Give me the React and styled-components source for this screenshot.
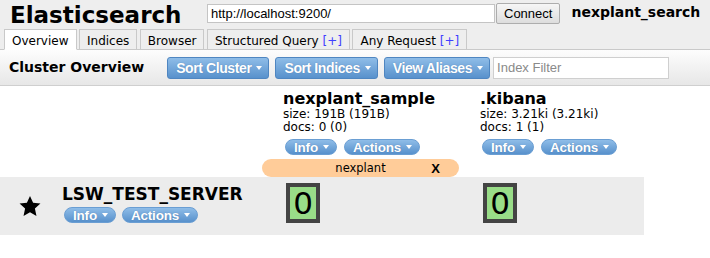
import React from "react";
import styled, { createGlobalStyle } from "styled-components";

const verdana = `"DejaVu Sans", Verdana, sans-serif`;
const arial = `"Liberation Sans", Arial, sans-serif`;
const COLS = "262px 197px 185px";

const GlobalStyle = createGlobalStyle`
  html, body { margin: 0; padding: 0; background: #fff; }
  body { font-family: ${verdana}; font-size: 12px; color: #000; }
`;

const Header = styled.div`
  display: flex;
  align-items: flex-start;
  height: 29px;
  padding-left: 10px;
  background: #eee;
`;

const Title = styled.h1`
  margin: 0;
  padding-top: 1px;
  width: 197px;
  font: bold 23px/28px ${verdana};
`;

const UrlInput = styled.input`
  box-sizing: border-box;
  width: 288px;
  height: 19px;
  margin: 4px 0 0;
  padding: 0 3px;
  border: 1px solid #c4c4c4;
  background: #fff;
  color: #000;
  font: 13px ${arial};
  outline: none;
`;

const ConnectButton = styled.button`
  box-sizing: border-box;
  height: 21px;
  margin: 3px 0 0 1px;
  padding: 0 7px;
  border: 1px solid #adadad;
  border-radius: 2px;
  background: linear-gradient(#f6f6f6, #dddddd);
  color: #000;
  font: 13px ${arial};
`;

const ClusterName = styled.div`
  margin: 4px 0 0 11px;
  font: bold 14px/17px ${verdana};
`;

const TabBar = styled.div`
  display: flex;
  gap: 2.5px;
  padding-left: 4px;
  background: #eee;
  border-bottom: 1px solid #c9c9c9;
`;

const Tab = styled.div`
  box-sizing: border-box;
  height: 21px;
  margin-bottom: -1px;
  padding: 3px 7px 0;
  border: 1px solid #c9c9c9;
  border-bottom-color: ${(p) => (p.$active ? "#fff" : "#c9c9c9")};
  background: ${(p) => (p.$active ? "#fff" : "#eee")};
  font: 12px/16px ${verdana};
  white-space: nowrap;
`;

const Plus = styled.span`
  color: #4040ff;
`;

const Toolbar = styled.div`
  display: flex;
  align-items: center;
  height: 35px;
  padding-left: 9px;
  border-bottom: 1px solid #cfcfcf;
  background: linear-gradient(#fdfdfd, #e7e7e7);
`;

const ToolbarTitle = styled.h2`
  margin: 0 23px 0 0;
  font: bold 14px/17px ${verdana};
`;

const Caret = styled.span`
  width: 0;
  height: 0;
  border-left: 3.5px solid transparent;
  border-right: 3.5px solid transparent;
  border-top: 4px solid #fff;
`;

const DropButton = styled.div`
  box-sizing: border-box;
  display: inline-flex;
  align-items: center;
  gap: 5px;
  height: 22px;
  padding: 0 6px 0 8px;
  border: 1px solid #4f86c1;
  border-radius: 3px;
  background: linear-gradient(#8fbde8, #5891cc);
  color: #fff;
  font: bold 14px ${arial};
  letter-spacing: -0.4px;
  text-shadow: 0 0 1px rgba(40, 80, 130, 0.5);
  & + & {
    margin-left: 6px;
  }
`;

const FilterInput = styled.input`
  box-sizing: border-box;
  width: 176px;
  height: 22px;
  margin-left: 3px;
  padding: 0 3px;
  border: 1px solid #cfcfcf;
  background: #fff;
  font: 13px ${arial};
  outline: none;
  &::placeholder {
    color: #8a8a8a;
  }
`;

const Overview = styled.div`
  display: grid;
  grid-template-columns: ${COLS};
`;

const IndexHead = styled.div`
  padding: 3px 0 4px 21px;
`;

const IndexName = styled.h3`
  margin: 0;
  font: bold 16px/19px ${verdana};
`;

const Stat = styled.div`
  font: 12px/13px ${verdana};
`;

const PillRow = styled.div`
  display: flex;
  gap: ${(p) => p.$gap}px;
  margin: ${(p) => p.$top}px 0 0 2px;
`;

const Pill = styled.div`
  box-sizing: border-box;
  display: inline-flex;
  align-items: center;
  gap: 5px;
  height: 16px;
  padding: 0 7px 0 8px;
  border: 1px solid #6a9ed3;
  border-radius: 8px;
  background: linear-gradient(#8fbde8, #5891cc);
  color: #fff;
  font: bold 13.5px ${arial};
  letter-spacing: -0.2px;
  text-shadow: 0 0 1px rgba(40, 80, 130, 0.5);
`;

const AliasBar = styled.div`
  grid-column: 2;
  display: grid;
  grid-template-columns: 1fr auto 1fr;
  align-items: center;
  height: 18px;
  border-radius: 9px;
  background: #ffcc99;
  font: 11.5px/18px ${verdana};
`;

const AliasName = styled.span`
  grid-column: 2;
`;

const AliasRemove = styled.span`
  justify-self: end;
  padding-right: 19px;
  font: bold 13px ${arial};
`;

const ClusterRow = styled.div`
  grid-column: 1 / -1;
  display: grid;
  grid-template-columns: ${COLS};
  background: #ececec;
`;

const NodeCell = styled.div`
  display: flex;
  align-items: center;
  padding-left: 19px;
`;

const NodeInfo = styled.div`
  margin: 7px 0 12px 21px;
`;

const NodeName = styled.h3`
  margin: 0;
  font: bold 17px/20px ${verdana};
`;

const ShardCell = styled.div`
  padding: 6px 0 0 24px;
`;

const Shard = styled.div`
  box-sizing: border-box;
  width: 34px;
  height: 40px;
  border: 4px solid #444;
  background: #99dd88;
  font: 31px/32px ${verdana};
  text-align: center;
`;

function Star() {
  return (
    <svg width="22" height="21" viewBox="0 0 22 21">
      <polygon
        points="11,0 14.1,6.8 21.46,7.6 15.9,12.6 17.47,19.9 11,16.3 4.53,19.9 6.1,12.6 0.54,7.6 7.9,6.8"
        fill="#000"
      />
    </svg>
  );
}

function Menu({ label }) {
  return (
    <Pill>
      {label}
      <Caret />
    </Pill>
  );
}

const indices = [
  { name: "nexplant_sample", size: "191B (191B)", docs: "0 (0)" },
  { name: ".kibana", size: "3.21ki (3.21ki)", docs: "1 (1)" },
];

const tabs = [
  { label: "Overview", active: true },
  { label: "Indices" },
  { label: "Browser" },
  { label: "Structured Query", plus: true },
  { label: "Any Request", plus: true },
];

export default function App() {
  return (
    <>
      <GlobalStyle />
      <Header>
        <Title>Elasticsearch</Title>
        <UrlInput defaultValue="http://localhost:9200/" />
        <ConnectButton>Connect</ConnectButton>
        <ClusterName>nexplant_search</ClusterName>
      </Header>
      <TabBar>
        {tabs.map((t) => (
          <Tab key={t.label} $active={t.active}>
            {t.label}
            {t.plus && (
              <>
                {" "}
                <Plus>[+]</Plus>
              </>
            )}
          </Tab>
        ))}
      </TabBar>
      <Toolbar>
        <ToolbarTitle>Cluster Overview</ToolbarTitle>
        {["Sort Cluster", "Sort Indices", "View Aliases"].map((l) => (
          <DropButton key={l}>
            {l}
            <Caret />
          </DropButton>
        ))}
        <FilterInput placeholder="Index Filter" />
      </Toolbar>
      <Overview>
        <div />
        {indices.map((ix) => (
          <IndexHead key={ix.name}>
            <IndexName>{ix.name}</IndexName>
            <Stat>size: {ix.size}</Stat>
            <Stat>docs: {ix.docs}</Stat>
            <PillRow $gap={7} $top={5}>
              <Menu label="Info" />
              <Menu label="Actions" />
            </PillRow>
          </IndexHead>
        ))}
        <AliasBar>
          <AliasName>nexplant</AliasName>
          <AliasRemove>X</AliasRemove>
        </AliasBar>
        <ClusterRow>
          <NodeCell>
            <Star />
            <NodeInfo>
              <NodeName>LSW_TEST_SERVER</NodeName>
              <PillRow $gap={6} $top={3}>
                <Menu label="Info" />
                <Menu label="Actions" />
              </PillRow>
            </NodeInfo>
          </NodeCell>
          {indices.map((ix) => (
            <ShardCell key={ix.name}>
              <Shard>0</Shard>
            </ShardCell>
          ))}
        </ClusterRow>
      </Overview>
    </>
  );
}
